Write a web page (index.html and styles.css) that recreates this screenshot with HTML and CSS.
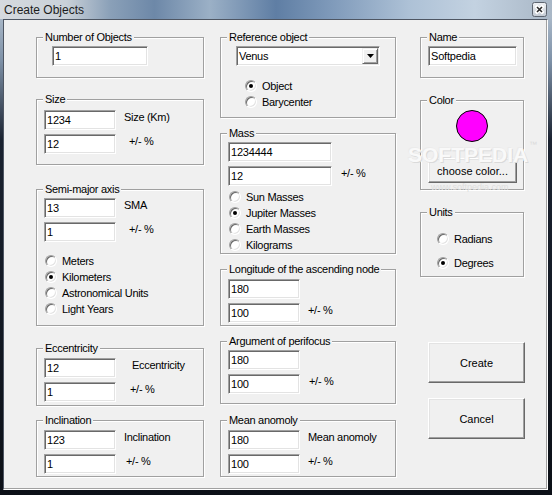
FILE: index.html
```html
<!DOCTYPE html>
<html lang="en">
<head>
  <meta charset="UTF-8">
  <title>Create Objects</title>
  <link rel="stylesheet" href="styles.css">
</head>
<body>

<div class="window">
  <div class="titlebar">
    <span class="title">Create Objects</span>
    <span class="close-btn">
      <svg width="15" height="15" viewBox="0 0 15 15">
        <defs>
          <linearGradient id="cb" x1="0" y1="0" x2="0" y2="1">
            <stop offset="0" stop-color="#eef1f4"/>
            <stop offset="1" stop-color="#c3cad3"/>
          </linearGradient>
        </defs>
        <rect x="0.5" y="0.5" width="14" height="14" rx="2" fill="url(#cb)" stroke="#5d6570"/>
        <path d="M5 5 L10 10 M10 5 L5 10" stroke="#fff" stroke-width="3.6" stroke-linecap="square"/>
        <path d="M5 5 L10 10 M10 5 L5 10" stroke="#2a2a2a" stroke-width="1.6"/>
      </svg>
    </span>
  </div>

  <div class="client">

    <div class="col col-1">
      <div class="group g-number">
        <div class="group-title">Number of Objects</div>
        <div class="row first"><input class="edit w96 ml8" value="1"></div>
      </div>

      <div class="group g-size">
        <div class="group-title">Size</div>
        <div class="row first lower"><input class="edit w72" value="1234"><span class="label">Size (Km)</span></div>
        <div class="row"><input class="edit w72" value="12"><span class="label ml13">+/- %</span></div>
      </div>

      <div class="group g-sma">
        <div class="group-title">Semi-major axis</div>
        <div class="row first"><input class="edit w72" value="13"><span class="label">SMA</span></div>
        <div class="row"><input class="edit w72" value="1"><span class="label ml13">+/- %</span></div>
        <div class="radios sma-radios">
          <div class="radio-row"><span class="radio"></span>Meters</div>
          <div class="radio-row"><span class="radio on"></span>Kilometers</div>
          <div class="radio-row"><span class="radio"></span>Astronomical Units</div>
          <div class="radio-row"><span class="radio"></span>Light Years</div>
        </div>
      </div>

      <div class="group g-ecc">
        <div class="group-title">Eccentricity</div>
        <div class="row first low"><input class="edit w72" value="12"><span class="label ml16">Eccentricity</span></div>
        <div class="row"><input class="edit w72" value="1"><span class="label ml14">+/- %</span></div>
      </div>

      <div class="group g-incl">
        <div class="group-title">Inclination</div>
        <div class="row first low"><input class="edit w72" value="123"><span class="label">Inclination</span></div>
        <div class="row"><input class="edit w72" value="1"><span class="label ml10">+/- %</span></div>
      </div>
    </div>

    <div class="col col-2">
      <div class="group g-ref">
        <div class="group-title">Reference object</div>
        <div class="row first">
          <div class="combo">
            <span class="combo-text">Venus</span>
            <span class="combo-btn"><svg width="7" height="4" viewBox="0 0 7 4"><polygon points="0,0 7,0 3.5,4" fill="#000"/></svg></span>
          </div>
        </div>
        <div class="radios ref-radios">
          <div class="radio-row"><span class="radio on"></span>Object</div>
          <div class="radio-row"><span class="radio"></span>Barycenter</div>
        </div>
      </div>

      <div class="group g-mass">
        <div class="group-title">Mass</div>
        <div class="row first"><input class="edit w104" value="1234444"></div>
        <div class="row"><input class="edit w104" value="12"><span class="label ml9">+/- %</span></div>
        <div class="radios mass-radios">
          <div class="radio-row"><span class="radio"></span>Sun Masses</div>
          <div class="radio-row"><span class="radio on"></span>Jupiter Masses</div>
          <div class="radio-row"><span class="radio"></span>Earth Masses</div>
          <div class="radio-row"><span class="radio"></span>Kilograms</div>
        </div>
      </div>

      <div class="group g-long">
        <div class="group-title">Longitude of the ascending node</div>
        <div class="row first low"><input class="edit w72" value="180"></div>
        <div class="row"><input class="edit w72" value="100"><span class="label">+/- %</span></div>
      </div>

      <div class="group g-arg">
        <div class="group-title">Argument of perifocus</div>
        <div class="row first"><input class="edit w72" value="180"></div>
        <div class="row"><input class="edit w72" value="100"><span class="label ml9">+/- %</span></div>
      </div>

      <div class="group g-mean">
        <div class="group-title">Mean anomoly</div>
        <div class="row first low"><input class="edit w72" value="180"><span class="label">Mean anomoly</span></div>
        <div class="row"><input class="edit w72" value="100"><span class="label">+/- %</span></div>
      </div>
    </div>

    <div class="col col-3">
      <div class="group g-name">
        <div class="group-title">Name</div>
        <div class="row first"><input class="edit w89" value="Softpedia"></div>
      </div>

      <div class="group g-color">
        <div class="group-title">Color</div>
        <div class="swatch"></div>
        <button class="btn btn-choose">choose color...</button>
      </div>

      <div class="group g-units">
        <div class="group-title">Units</div>
        <div class="radios units-radios">
          <div class="radio-row"><span class="radio"></span>Radians</div>
          <div class="radio-row"><span class="radio on"></span>Degrees</div>
        </div>
      </div>

      <button class="btn btn-big btn-create">Create</button>
      <button class="btn btn-big btn-cancel">Cancel</button>
    </div>

  </div>

  <div class="watermark">SOFTPEDIA</div>
  <div class="watermark-tm">™</div>
  <div class="watermark-url">www.softpedia.com</div>
</div>

</body>
</html>
```

FILE: styles.css
```css
* { box-sizing: border-box; }
body { margin: 0; background: #0d1118; font-family: "Liberation Sans", Arial, sans-serif; font-size: 11px; letter-spacing: -0.3px; color: #000; }

/* window frame */
.window { position: relative; width: 552px; height: 495px; overflow: hidden; background: linear-gradient(#b9c6d4 0, #7f92a8 60px, #1a2230 140px, #0c1017 100%); }
.titlebar { height: 19px; display: flex; align-items: center; background: linear-gradient(to right, #d6dadf 0%, #c9d0d8 12%, #8aa0b8 20%, #6d88a8 28%, #9bb0c6 38%, #5f7ea4 50%, #7f9aba 60%, #adc1d6 74%, #c3d2e1 86%, #a9b7c6 100%); }
.title { padding-left: 4px; font-size: 12px; letter-spacing: 0; color: #1c1c1c; }
.close-btn { margin-left: auto; margin-right: 5px; width: 15px; height: 15px; }
.close-btn svg { display: block; }

.client { display: flex; width: 545px; height: 471px; margin-left: 3px; padding: 17px 0 0 32px; background: #f0f0f0; border: 1px solid; border-color: #4e5663 #fff #fff #4e5663; box-shadow: inset -1px -1px 0 #a0a0a0; }

/* columns */
.col { display: flex; flex-direction: column; flex: none; }
.col-1 { width: 168px; }
.col-2 { width: 176px; margin-left: 16px; }
.col-3 { width: 104px; margin-left: 24px; }

/* group boxes */
.group { flex: none; border: 1px solid #a0a0a0; box-shadow: inset 1px 1px 0 #fff, 1px 1px 0 #fff; padding: 0 7px; }
.group-title { width: max-content; margin: -7px 0 0 -1px; padding: 0 2px; line-height: 13px; background: #f0f0f0; }

.g-number { height: 41px; }
.g-size { height: 66px; margin-top: 21px; }
.g-sma { height: 137px; margin-top: 24px; }
.g-ecc { height: 58px; margin-top: 22px; }
.g-incl { height: 57px; margin-top: 14px; }

.g-ref { height: 81px; }
.g-mass { height: 121px; margin-top: 15px; }
.g-long { height: 57px; margin-top: 15px; }
.g-arg { height: 63px; margin-top: 15px; }
.g-mean { height: 57px; margin-top: 16px; }

.g-name { height: 41px; }
.g-color { height: 90px; margin-top: 22px; }
.g-units { height: 65px; margin-top: 22px; }

/* rows */
.row { display: flex; align-items: flex-start; margin-top: 4px; }
.row.first { margin-top: 2px; }
.row.first.low { margin-top: 3px; }
.row.first.lower { margin-top: 4px; }

.edit { flex: none; height: 20px; padding: 0 0 0 2px; border: 1px solid; border-color: #a0a0a0 #fff #fff #a0a0a0; box-shadow: inset 1px 1px 0 #696969, inset -1px -1px 0 #e3e3e3; background: #fff; font: inherit; letter-spacing: -0.2px; color: #000; outline: none; }
.w72 { width: 72px; }
.w89 { width: 89px; }
.w96 { width: 96px; }
.w104 { width: 104px; }
.ml8 { margin-left: 8px; }

.label { margin-left: 8px; margin-top: 1px; line-height: 13px; white-space: nowrap; }
.label.ml9 { margin-left: 9px; }
.label.ml10 { margin-left: 10px; }
.label.ml13 { margin-left: 13px; }
.label.ml14 { margin-left: 14px; }
.label.ml16 { margin-left: 16px; }

/* combo box */
.combo { display: flex; align-items: center; width: 144px; height: 20px; margin-left: 8px; padding: 0 1px 0 1px; border: 1px solid; border-color: #a0a0a0 #fff #fff #a0a0a0; box-shadow: inset 1px 1px 0 #696969, inset -1px -1px 0 #e3e3e3; background: #fff; }
.combo-text { flex: 1; padding-left: 1px; line-height: 13px; }
.combo-btn { display: flex; align-items: center; justify-content: center; width: 16px; height: 16px; background: #f0f0f0; border: 1px solid; border-color: #f0f0f0 #696969 #696969 #f0f0f0; box-shadow: inset 1px 1px 0 #fff, inset -1px -1px 0 #a0a0a0; }
.combo-btn svg { display: block; }

/* radio buttons */
.radio-row { display: flex; align-items: center; height: 16px; line-height: 13px; white-space: nowrap; }
.radio { display: flex; align-items: center; justify-content: center; flex: none; width: 12px; height: 12px; margin: 0 5px 0 1px; border-radius: 50%; background: #fff; border: 1px solid; border-color: #a0a0a0 #fff #fff #a0a0a0; box-shadow: inset 1px 1px 0 #696969, inset -1px -1px 0 #e3e3e3; }
.radio.on::after { content: ""; width: 4px; height: 4px; border-radius: 50%; background: #000; }

.sma-radios { margin-top: 11px; }
.ref-radios { margin-top: 12px; padding-left: 16px; }
.mass-radios { margin-top: 3px; }
.units-radios { margin-top: 12px; padding-left: 8px; }
.units-radios .radio-row + .radio-row { margin-top: 8px; }

/* color */
.swatch { width: 32px; height: 32px; margin: 3px auto 0; border-radius: 50%; background: #ff00ff; border: 1px solid #000; }

/* buttons */
.btn { display: flex; align-items: center; justify-content: center; padding: 0; background: #f0f0f0; border: 1px solid; border-color: #fff #696969 #696969 #fff; box-shadow: inset -1px -1px 0 #a0a0a0, inset 1px 1px 0 #e3e3e3; font: inherit; color: #000; }
.btn-choose { width: 89px; height: 25px; margin-top: 16px; }
.btn-big { flex: none; width: 97px; height: 41px; margin-left: 8px; }
.btn-create { margin-top: 65px; }
.btn-cancel { margin-top: 15px; }

/* watermark */
.watermark { position: absolute; left: 408px; top: 143px; font-size: 21px; font-weight: bold; letter-spacing: 0; color: #f9f9f9; text-shadow: 1px 1px 0 #dadada, -1px -1px 0 #ebebeb; pointer-events: none; }
.watermark-tm { position: absolute; left: 529px; top: 140px; font-size: 8px; color: #dadada; }
.watermark-url { position: absolute; left: 431px; top: 182px; font-size: 9px; letter-spacing: 0; color: #dedede; }
```
